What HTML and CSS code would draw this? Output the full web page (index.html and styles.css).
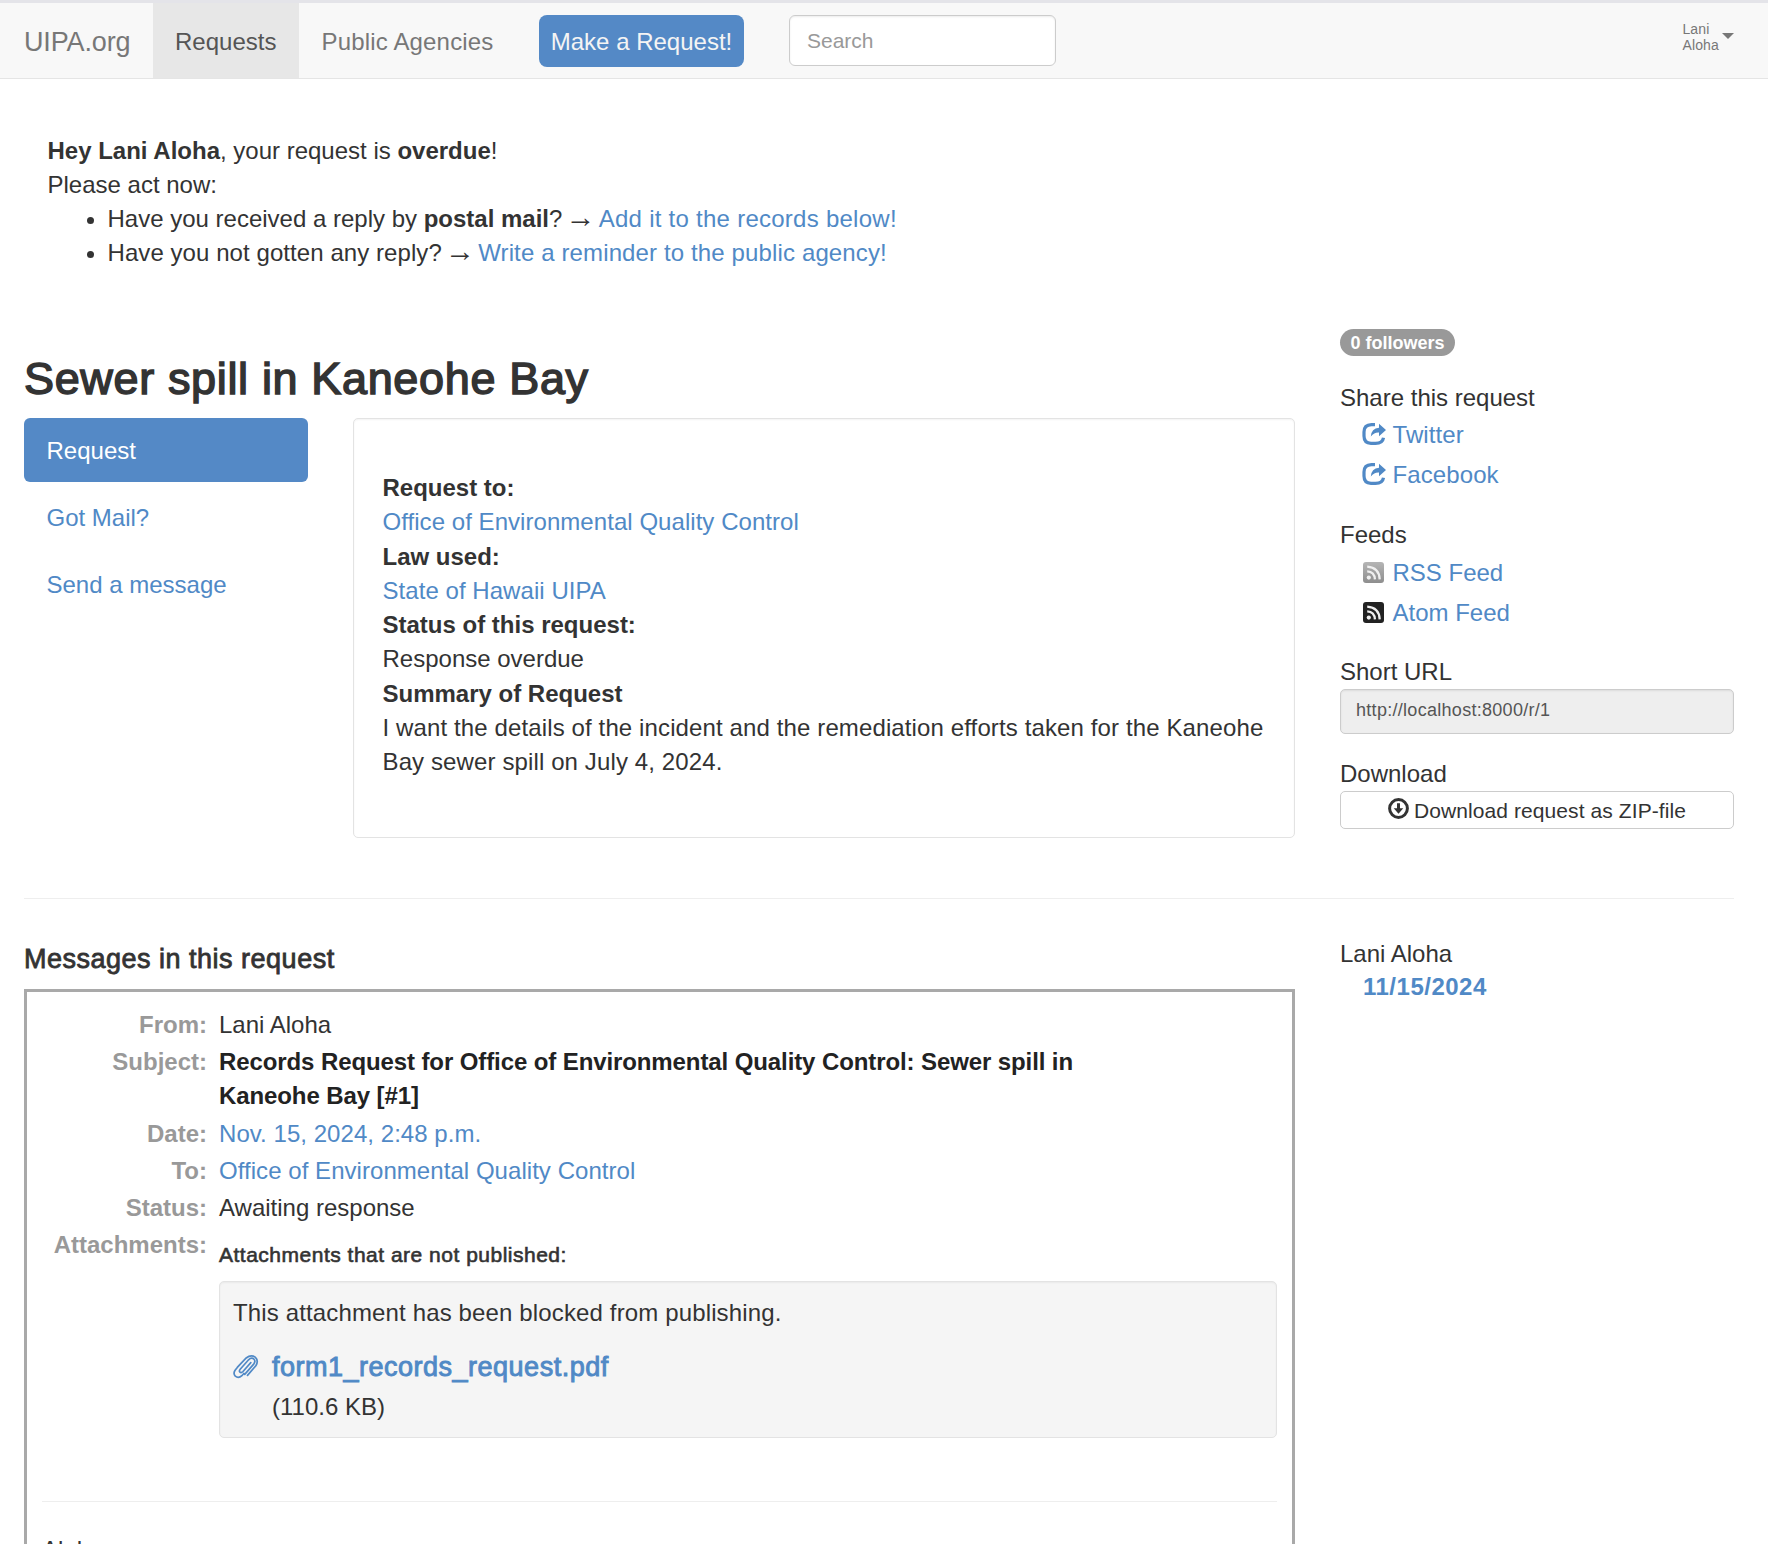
FILE: index.html
```html
<!DOCTYPE html>
<html lang="en">
<head>
<meta charset="utf-8">
<title>Sewer spill in Kaneohe Bay - UIPA.org</title>
<link rel="stylesheet" href="styles.css">
</head>
<body>
<svg class="sprite" width="0" height="0" aria-hidden="true">
  <symbol id="share" viewBox="0 0 24 22">
    <path d="M13 1.700H9.500Q2 1.900 2 9v4q0 7.200 7 7.300h4.500q7.200 0 8-5.600" fill="none" stroke="currentColor" stroke-width="3.200"/>
    <path d="M17 .800 24 7l-7 6.200V9.600q-4.600-.4-8.200 3.800.6-7.800 8.200-8.600z" fill="currentColor"/>
  </symbol>
  <symbol id="feed" viewBox="0 0 21 21">
    <circle cx="5.800" cy="15.600" r="2.100" fill="#f0f0f0"/>
    <path d="M4.200 9.300q7.300.2 7.700 8.100M4.200 4.700q11.900.8 12.500 12.700" fill="none" stroke="#f0f0f0" stroke-width="2.300"/>
  </symbol>
  <symbol id="download" viewBox="0 0 21 21">
    <circle cx="10.500" cy="10.500" r="8.900" fill="none" stroke="currentColor" stroke-width="3"/>
    <path d="M9 5.200h3v5h3.300l-4.800 5.600-4.800-5.600H9z" fill="currentColor"/>
  </symbol>
  <symbol id="clip" viewBox="0 0 26 24">
    <path d="M17.800 7.600 10 16.500q-1.800 1.700-3 .6-1.200-1.200.2-2.900l8.400-9.400q2.800-2.800 5.200-.8 2.200 2.200-.1 5.100l-9 10.300M22.800 10.800l-8.300 9.600M4.500 12.200 13.200 3q4.700-3.700 9-.9 3.700 3.500.7 8.600M4.700 12l-2.600 3.200q-2.200 3.400.2 6 3.200 2.500 6.600-.5l1.900-2.200" fill="none" stroke="currentColor" stroke-width="1.700" stroke-linecap="round"/>
  </symbol>
</svg>

<nav class="navbar">
  <a class="brand">UIPA.org</a>
  <a class="nav-link active">Requests</a>
  <a class="nav-link agencies">Public Agencies</a>
  <a class="make-request">Make a Request!</a>
  <input class="search" type="text" placeholder="Search">
  <div class="user"><span>Lani<br>Aloha</span><b class="caret"></b></div>
</nav>

<section class="notice">
  <p><strong>Hey Lani Aloha</strong>, your request is <strong>overdue</strong>!</p>
  <p>Please act now:</p>
  <ul>
    <li>Have you received a reply by <strong>postal mail</strong>? <span class="arrow">→</span> <a class="add">Add it to the records below!</a></li>
    <li><span class="question">Have you not gotten any reply?</span> <span class="arrow">→</span> <a class="write">Write a reminder to the public agency!</a></li>
  </ul>
</section>

<div class="columns overview">
  <main>
    <h1>Sewer spill in Kaneohe Bay</h1>
    <div class="request">
      <div class="tabs">
        <a class="current">Request</a>
        <a>Got Mail?</a>
        <a>Send a message</a>
      </div>
      <dl class="well info">
        <dt>Request to:</dt>
        <dd><a>Office of Environmental Quality Control</a></dd>
        <dt>Law used:</dt>
        <dd><a>State of Hawaii UIPA</a></dd>
        <dt>Status of this request:</dt>
        <dd>Response overdue</dd>
        <dt>Summary of Request</dt>
        <dd class="summary">I want the details of the incident and the remediation efforts taken for the Kaneohe Bay sewer spill on July 4, 2024.</dd>
      </dl>
    </div>
  </main>
  <aside>
    <span class="badge">0 followers</span>
    <h5>Share this request</h5>
    <ul class="links share">
      <li><a><svg width="24" height="22"><use href="#share"/></svg>Twitter</a></li>
      <li><a><svg width="24" height="22"><use href="#share"/></svg>Facebook</a></li>
    </ul>
    <h5>Feeds</h5>
    <ul class="links feeds">
      <li><a><svg class="rss" width="21" height="21"><use href="#feed"/></svg>RSS Feed</a></li>
      <li><a><svg class="atom" width="21" height="21"><use href="#feed"/></svg>Atom Feed</a></li>
    </ul>
    <h5>Short URL</h5>
    <input class="short-url" type="text" readonly value="http://localhost:8000/r/1">
    <h5>Download</h5>
    <a class="zip"><svg width="21" height="21"><use href="#download"/></svg>Download request as ZIP-file</a>
  </aside>
</div>

<hr class="divider">

<div class="columns">
  <main>
    <h3>Messages in this request</h3>
    <article class="message">
      <dl class="headers">
        <dt>From:</dt><dd>Lani Aloha</dd>
        <dt>Subject:</dt><dd class="subject">Records Request for Office of Environmental Quality Control: Sewer spill in Kaneohe Bay [#1]</dd>
        <dt>Date:</dt><dd><a>Nov. 15, 2024, 2:48 p.m.</a></dd>
        <dt>To:</dt><dd><a>Office of Environmental Quality Control</a></dd>
        <dt>Status:</dt><dd>Awaiting response</dd>
        <dt>Attachments:</dt>
        <dd class="attachments">
          <h5>Attachments that are not published:</h5>
          <div class="well blocked">
            <p class="reason">This attachment has been blocked from publishing.</p>
            <div class="file">
              <svg width="26" height="24"><use href="#clip"/></svg>
              <div><a class="filename">form1_records_request.pdf</a><p>(110.6 KB)</p></div>
            </div>
          </div>
        </dd>
      </dl>
      <hr>
      <p class="body-text">Aloha,</p>
    </article>
  </main>
  <aside class="timeline">
    <h5>Lani Aloha</h5>
    <a>11/15/2024</a>
  </aside>
</div>
</body>
</html>
```
FILE: styles.css
```css
* { box-sizing: border-box; }
html { height: 1544px; overflow: hidden; }
body {
  margin: 0;
  height: 1544px;
  overflow: hidden;
  background: #fff;
  color: #333;
  font: 24px/34.28px "Liberation Sans", Arial, sans-serif;
}
h1, h3, h5, p, ul, dl, dd { margin: 0; padding: 0; }
ul { list-style: none; }
a { color: #5089c6; text-decoration: none; }
input { font-family: inherit; outline: 0; }
.sprite { display: block; height: 0; }

.navbar {
  display: flex;
  height: 79px;
  padding-left: 24px;
  border-top: 3px solid #e4e4e9;
  border-bottom: 1px solid #e5e5e5;
  background: #f8f8f8;
}
.navbar a { color: #777; }
.brand { width: 129px; padding-top: 22px; font-size: 27px; letter-spacing: -.15px; }
.navbar .nav-link { height: 75px; padding: 22px 0 0 22px; white-space: nowrap; }
.navbar .nav-link.active { width: 146px; background: #e7e7e7; color: #555; }
.navbar .agencies { width: 217px; padding-left: 22.500px; letter-spacing: .17px; }
.navbar .make-request {
  width: 205px;
  height: 52px;
  margin: 12px 45px 0 23px;
  padding-top: 10px;
  border-radius: 8px;
  background: #5489c6;
  color: #f4f4f4;
  text-align: center;
  white-space: nowrap;
}
.search {
  width: 267px;
  height: 51px;
  margin-top: 12px;
  padding: 0 17px;
  border: 1px solid #ccc;
  border-radius: 6px;
  box-shadow: inset 0 1px 2px rgba(0, 0, 0, .075);
  font-size: 21px;
}
.search::placeholder { color: #999; }
.user {
  display: flex;
  margin: 18px 34px 0 auto;
  color: #777;
  font-size: 14px;
  line-height: 16px;
  letter-spacing: .15px;
}
.caret {
  height: 6px;
  margin: 12px 0 0 3px;
  border: 6px solid transparent;
  border-top-color: #777;
  border-bottom: 0;
}

.notice { padding: 54.500px 47.500px 0; height: 250px; }
.notice ul { padding-left: 60px; list-style: disc; }
.arrow { margin: 0 -3.500px; font-size: 30px; line-height: 1; }
.question { letter-spacing: .07px; }
.notice .add { letter-spacing: .26px; }
.notice .write { letter-spacing: .13px; }

.columns {
  display: grid;
  grid-template-columns: 1271px 394px;
  column-gap: 45px;
  padding-left: 24px;
}
.overview { height: 569px; }
h1 {
  height: 89px;
  padding-top: 25px;
  font-size: 45px;
  font-weight: 400;
  line-height: 50px;
  letter-spacing: .65px;
  -webkit-text-stroke: 1.500px #333;
}
.request { display: grid; grid-template-columns: 284px 942px; column-gap: 45px; }
.tabs { display: flex; flex-direction: column; gap: 3px; }
.tabs a { height: 64px; padding: 16px 22.500px; border-radius: 6px; }
.tabs .current { background: #5489c6; color: #fff; }
.well {
  border: 1px solid #e3e3e3;
  border-radius: 5px;
  box-shadow: inset 0 1px 2px rgba(0, 0, 0, .05);
}
.info { height: 420px; padding: 52px 28.500px; }
.info dt { font-weight: 700; }
.info a, .headers a { letter-spacing: .05px; }
.summary { letter-spacing: .12px; }

.badge {
  display: block;
  width: 115px;
  height: 27px;
  border-radius: 14px;
  background: #999;
  color: #fff;
  font-size: 18px;
  font-weight: 700;
  line-height: 28px;
  text-align: center;
}
aside h5 { font-size: 24px; font-weight: 400; line-height: 34px; }
.badge + h5 { margin-top: 25px; }
.links { padding-left: 22px; }
.links a { display: flex; align-items: center; height: 40px; }
.share { margin: 0 0 23px; }
.share svg { margin: -2px 6.500px 0 0; }
.share a { letter-spacing: .1px; }
.feeds { margin: 1px 0 22px; }
.feeds svg { margin: -1px 8.500px 0 1px; border-radius: 3px; }
.rss { background: linear-gradient(#b5b5b5, #8e8e8e); }
.atom { background: #222; }
.short-url {
  display: block;
  width: 394px;
  height: 45px;
  margin-bottom: 23px;
  padding: 0 15px 2px;
  border: 1px solid #ccc;
  border-radius: 5px;
  background: #eee;
  box-shadow: inset 0 1px 2px rgba(0, 0, 0, .075);
  color: #555;
  font-size: 18px;
  letter-spacing: .29px;
}
.zip {
  display: flex;
  justify-content: center;
  height: 38px;
  border: 1px solid #ccc;
  border-radius: 5px;
  color: #333;
  font-size: 21px;
  line-height: 38px;
  letter-spacing: .09px;
}
.zip svg { margin: 6px 5px 0 0; }

hr { height: 1px; margin: 0; border: 0; background: #eee; }
.divider { width: 1710px; margin-left: 24px; }
h3 {
  height: 90px;
  padding-top: 43px;
  font-size: 27px;
  font-weight: 400;
  letter-spacing: .5px;
  -webkit-text-stroke: .8px #333;
}
.message { height: 700px; padding: 15.700px 15px 0; border: 3px solid #a9a9a9; }
.headers {
  display: grid;
  grid-template-columns: 165px 1058px;
  column-gap: 12px;
  row-gap: 3px;
}
.headers dt { color: #999; font-weight: 700; text-align: right; }
.subject { width: 870px; color: #222; font-weight: 700; letter-spacing: -.1px; }
.attachments h5 {
  height: 52.500px;
  padding-top: 9.500px;
  font-size: 21px;
  font-weight: 400;
  letter-spacing: .5px;
  -webkit-text-stroke: .6px #333;
}
.blocked { height: 157px; padding: 14px 13px; background: #f5f5f5; }
.reason { letter-spacing: .14px; }
.file { display: grid; grid-template-columns: 26px 1fr; column-gap: 13px; padding-top: 20px; }
.file svg { margin-top: 5px; color: #5089c6; }
.headers .filename {
  display: block;
  height: 40px;
  font-size: 27px;
  letter-spacing: .5px;
  -webkit-text-stroke: .9px #5089c6;
}
.message hr { margin-top: 63px; }
.body-text { padding-top: 31px; }
.timeline { padding-top: 38px; }
.timeline h5 { height: 33px; }
.timeline a { padding-left: 23px; font-weight: 700; letter-spacing: .5px; }
```
